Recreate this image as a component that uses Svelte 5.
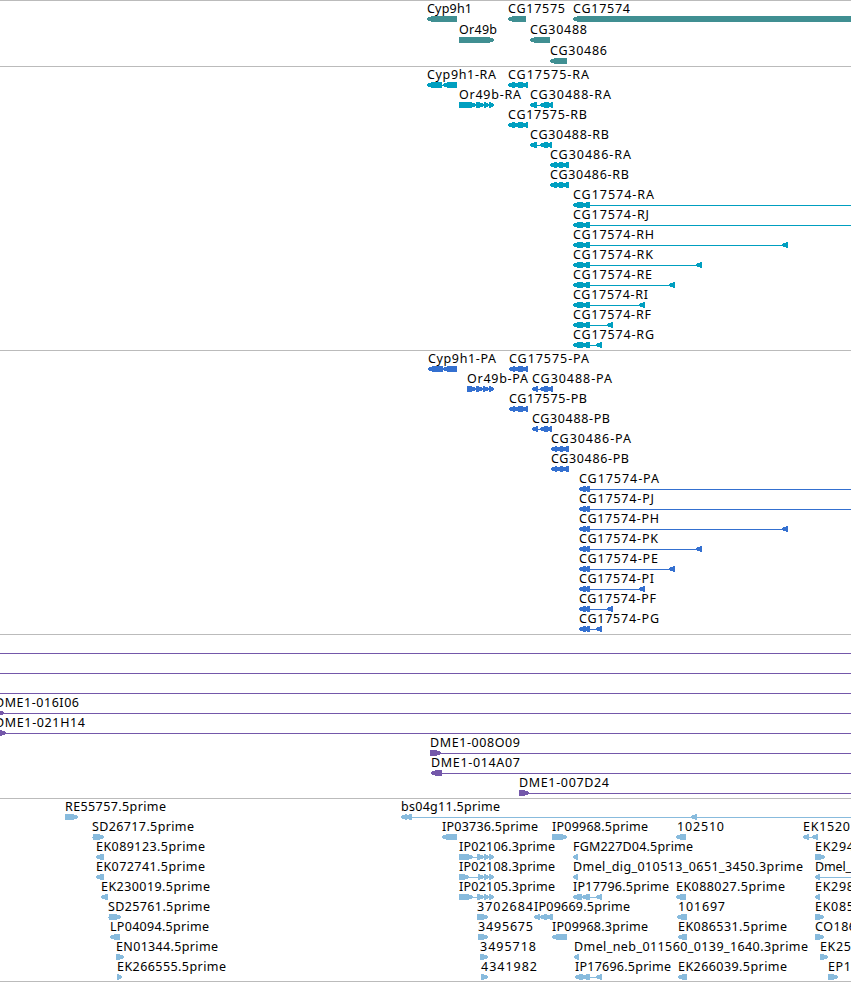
<script>
	const WIDTH = 851;

	// feature: [label, row, x, label width, direction, exons, end of the connector]
	const tracks = [
		{
			name: 'gene',
			color: '#408f92',
			height: 65,
			rowHeight: 21,
			features: [
				['Cyp9h1', 0, 427, 45, 'L', [[427, 457]]],
				['CG17575', 0, 508, 57, 'L', [[508, 526]]],
				['CG17574', 0, 573, 57, 'L', [[573, 860]]],
				['Or49b', 1, 459, 38, 'R', [[459, 494]]],
				['CG30488', 1, 530, 57, 'L', [[530, 550]]],
				['CG30486', 2, 550, 57, 'L', [[550, 567]]]
			]
		},
		{
			name: 'transcript',
			color: '#009fc0',
			height: 283,
			rowHeight: 20,
			features: [
				['Cyp9h1-RA', 0, 427, 69, 'L', [[427, 442], [443, 457]]],
				['CG17575-RA', 0, 508, 81, 'L', [[508, 515], [514, 523], [522, 528]]],
				['Or49b-RA', 1, 459, 62, 'R', [[459, 476], [476, 484], [484, 489], [489, 494]]],
				['CG30488-RA', 1, 530, 81, 'L', [[530, 537], [540, 549], [547, 553]]],
				['CG17575-RB', 2, 508, 79, 'L', [[508, 515], [514, 523], [522, 528]]],
				['CG30488-RB', 3, 530, 79, 'L', [[530, 537], [540, 548], [546, 552]]],
				['CG30486-RA', 4, 550, 81, 'L', [[550, 557], [555, 563], [562, 569]]],
				['CG30486-RB', 5, 550, 79, 'L', [[550, 557], [555, 563], [562, 569]]],
				['CG17574-RA', 6, 573, 81, 'L', [[573, 583], [582, 590]], WIDTH],
				['CG17574-RJ', 7, 573, 76, 'L', [[573, 583], [582, 590]], WIDTH],
				['CG17574-RH', 8, 573, 81, 'L', [[573, 583], [582, 590], [782, 788]]],
				['CG17574-RK', 9, 573, 80, 'L', [[573, 583], [582, 590], [696, 702]]],
				['CG17574-RE', 10, 573, 79, 'L', [[573, 583], [582, 590], [669, 675]]],
				['CG17574-RI', 11, 573, 75, 'L', [[573, 583], [582, 590], [639, 645]]],
				['CG17574-RF', 12, 573, 78, 'L', [[573, 583], [582, 590], [607, 613]]],
				['CG17574-RG', 13, 573, 81, 'L', [[573, 583], [582, 590], [596, 602]]]
			]
		},
		{
			name: 'protein',
			color: '#3470d0',
			height: 283,
			rowHeight: 20,
			features: [
				['Cyp9h1-PA', 0, 428, 68, 'L', [[428, 443], [443, 457]]],
				['CG17575-PA', 0, 509, 80, 'L', [[509, 515], [514, 523], [522, 528]]],
				['Or49b-PA', 1, 467, 61, 'R', [[467, 476], [476, 483], [483, 489], [489, 494]]],
				['CG30488-PA', 1, 532, 80, 'L', [[532, 538], [540, 548], [547, 553]]],
				['CG17575-PB', 2, 509, 78, 'L', [[509, 515], [514, 523], [522, 528]]],
				['CG30488-PB', 3, 532, 78, 'L', [[532, 538], [540, 548], [546, 552]]],
				['CG30486-PA', 4, 551, 80, 'L', [[551, 557], [556, 563], [562, 569]]],
				['CG30486-PB', 5, 551, 78, 'L', [[551, 557], [556, 563], [562, 569]]],
				['CG17574-PA', 6, 579, 80, 'L', [[579, 586], [583, 590]], WIDTH],
				['CG17574-PJ', 7, 579, 75, 'L', [[579, 586], [583, 590]], WIDTH],
				['CG17574-PH', 8, 579, 80, 'L', [[579, 586], [583, 590], [782, 788]]],
				['CG17574-PK', 9, 579, 79, 'L', [[579, 586], [583, 590], [696, 702]]],
				['CG17574-PE', 10, 579, 79, 'L', [[579, 586], [583, 590], [669, 675]]],
				['CG17574-PI', 11, 579, 75, 'L', [[579, 586], [583, 590], [639, 645]]],
				['CG17574-PF', 12, 579, 77, 'L', [[579, 586], [583, 590], [607, 613]]],
				['CG17574-PG', 13, 579, 80, 'L', [[579, 586], [583, 590], [596, 602]]]
			]
		},
		{
			name: 'clone',
			color: '#7458aa',
			height: 163,
			rowHeight: 20,
			features: [
				['', 0, 0, 0, 'R', [], WIDTH],
				['', 1, 0, 0, 'R', [], WIDTH],
				['', 2, 0, 0, 'R', [], WIDTH],
				['DME1-016I06', 3, -5, 84, 'R', [[-8, 4]], WIDTH],
				['DME1-021H14', 4, -5, 90, 'R', [[-6, 6]], WIDTH],
				['DME1-008O09', 5, 430, 90, 'R', [[430, 441]], WIDTH],
				['DME1-014A07', 6, 431, 89, 'L', [[431, 442]], WIDTH],
				['DME1-007D24', 7, 519, 90, 'R', [[519, 529]], WIDTH]
			]
		},
		{
			name: 'est',
			color: '#88bbdd',
			height: 182,
			rowHeight: 20,
			features: [
				['RE55757.5prime', 0, 65, 101, 'R', [[65, 78]]],
				['bs04g11.5prime', 0, 401, 99, 'L', [[401, 407], [405, 412], [691, 697]], WIDTH],
				['SD26717.5prime', 1, 92, 102, 'R', [[93, 104]]],
				['IP03736.5prime', 1, 442, 96, 'L', [[442, 457]]],
				['IP09968.5prime', 1, 552, 96, 'R', [[552, 567]]],
				['102510', 1, 677, 47, 'L', [[676, 686]]],
				['EK1520', 1, 803, 47, 'L', [[803, 809], [812, 818]]],
				['EK089123.5prime', 2, 96, 109, 'L', [[96, 104]]],
				['IP02106.3prime', 2, 459, 96, 'R', [[459, 473], [477, 484], [484, 489], [489, 494]]],
				['FGM227D04.5prime', 2, 573, 120, 'L', [[573, 578]]],
				['EK294', 2, 815, 39, 'R', [[815, 825]]],
				['EK072741.5prime', 3, 96, 109, 'L', [[96, 104]]],
				['IP02108.3prime', 3, 459, 96, 'R', [[459, 469], [478, 484], [484, 489], [489, 494]]],
				['Dmel_dig_010513_0651_3450.3prime', 3, 573, 230, 'L', [[573, 578]]],
				['Dmel_', 3, 815, 36, 'L', [[815, 820]], WIDTH],
				['EK230019.5prime', 4, 101, 109, 'L', [[101, 108]]],
				['IP02105.3prime', 4, 459, 96, 'R', [[459, 473], [477, 484], [484, 489], [489, 494]]],
				['IP17796.5prime', 4, 573, 96, 'L', [[573, 582], [582, 590], [596, 602]]],
				['EK088027.5prime', 4, 676, 109, 'L', [[676, 686]]],
				['EK298', 4, 815, 39, 'L', [[815, 820]]],
				['SD25761.5prime', 5, 108, 102, 'R', [[109, 121]]],
				['3702684', 5, 477, 56, 'R', [[477, 488]]],
				['IP09669.5prime', 5, 534, 96, 'L', [[534, 540], [540, 547], [546, 553]]],
				['101697', 5, 678, 47, 'L', [[677, 687]]],
				['EK085', 5, 815, 39, 'R', [[815, 824]]],
				['LP04094.5prime', 6, 110, 99, 'L', [[110, 120]]],
				['3495675', 6, 478, 55, 'R', [[478, 488]]],
				['IP09968.3prime', 6, 552, 96, 'L', [[552, 567]]],
				['EK086531.5prime', 6, 678, 109, 'L', [[678, 687]]],
				['CO186', 6, 815, 41, 'R', [[815, 824]]],
				['EN01344.5prime', 7, 116, 102, 'R', [[116, 124]]],
				['3495718', 7, 480, 56, 'R', [[480, 488]]],
				['Dmel_neb_011560_0139_1640.3prime', 7, 574, 234, 'L', [[574, 579]]],
				['EK25', 7, 820, 31, 'R', [[820, 828]]],
				['EK266555.5prime', 8, 117, 109, 'R', [[117, 122]]],
				['4341982', 8, 481, 56, 'R', [[481, 488]]],
				['IP17696.5prime', 8, 575, 96, 'L', [[575, 583], [582, 590], [596, 602]]],
				['EK266039.5prime', 8, 678, 109, 'L', [[678, 687]]],
				['EP1', 8, 828, 23, 'R', [[828, 838]]]
			]
		}
	];

	// box with a point on the side the strand runs to
	function arrow([a, b], dir, top) {
		const head = Math.min(b - a, 6);
		const tip = dir === 'L' ? a : b;
		const tail = dir === 'L' ? b : a;
		const neck = dir === 'L' ? a + head - 1 : b - head + 1;
		return `${tail},${top} ${neck},${top} ${tip},${top + 2} ${tip},${top + 4} ${neck},${top + 6} ${tail},${top + 6}`;
	}

	function connector(x, exons, end) {
		const stop = end ?? exons[exons.length - 1][1];
		return { x, width: stop - x };
	}
</script>

<main class="browser">
	{#each tracks as track}
		<section class="track">
			<svg width={WIDTH} height={track.height} fill={track.color} role="img" aria-label={track.name}>
				{#each track.features as [label, row, x, w, dir, exons, end]}
					{@const top = row * track.rowHeight + 15}
					{@const line = connector(x, exons, end)}
					<rect class="shape" x={line.x} y={top + 3} width={line.width} height="1" />
					{#each exons as exon}
						<polygon class="shape" points={arrow(exon, dir, top)} />
					{/each}
					{#if label}
						<text x={x} y={top - 3} textLength={w} lengthAdjust="spacing">{label}</text>
					{/if}
				{/each}
			</svg>
		</section>
	{/each}
</main>

<style>
	:global(body) {
		margin: 0;
		background: #fff;
	}

	.browser {
		width: 851px;
		height: 982px;
		overflow: hidden;
		display: flex;
		flex-direction: column;
	}

	.track {
		border-top: 1px solid #bbb;
	}

	.track:last-child {
		border-bottom: 1px solid #bbb;
	}

	svg {
		display: block;
		overflow: hidden;
	}

	.shape {
		shape-rendering: crispEdges;
	}

	text {
		font-family: 'Noto Sans', 'DejaVu Sans', sans-serif;
		font-size: 12.5px;
		fill: #000;
	}
</style>
